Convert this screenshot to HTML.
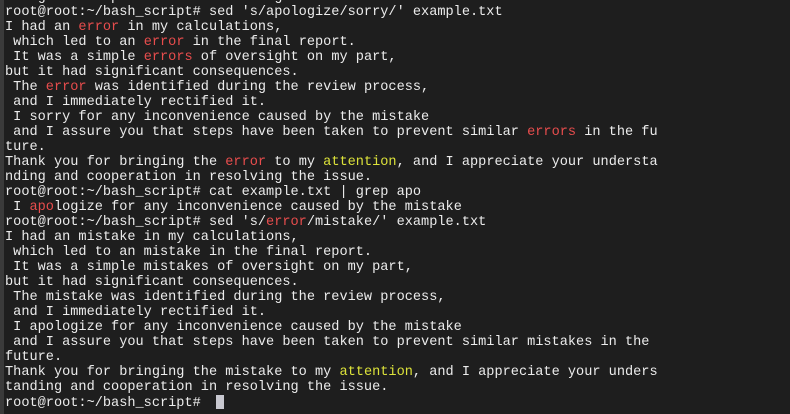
<!DOCTYPE html>
<html><head><style>
html,body{margin:0;padding:0;background:#1e1e1e;overflow:hidden;width:790px;height:414px}
.bar{position:absolute;left:0;top:0;width:4px;height:414px;background:#3a3a3a}
pre{position:absolute;left:5px;top:-10.5px;margin:0;font-family:"Liberation Mono",monospace;font-size:13.6px;line-height:15px;color:#ececec;letter-spacing:0}
.r{color:#e84d4d}.y{color:#dce23a}
.c{display:inline-block;width:8px;height:14px;background:#c8c8d0;vertical-align:-3px;margin-left:7px}
</style></head><body><div class="bar"></div><pre>nding and cooperation in resolving the issue.
root@root:~/bash_script# sed 's/apologize/sorry/' example.txt
I had an <span class="r">error</span> in my calculations,
 which led to an <span class="r">error</span> in the final report.
 It was a simple <span class="r">errors</span> of oversight on my part,
but it had significant consequences.
 The <span class="r">error</span> was identified during the review process,
 and I immediately rectified it.
 I sorry for any inconvenience caused by the mistake
 and I assure you that steps have been taken to prevent similar <span class="r">errors</span> in the fu
ture.
Thank you for bringing the <span class="r">error</span> to my <span class="y">attention</span>, and I appreciate your understa
nding and cooperation in resolving the issue.
root@root:~/bash_script# cat example.txt | grep apo
 I <span class="r">apo</span>logize for any inconvenience caused by the mistake
root@root:~/bash_script# sed 's/<span class="r">error</span>/mistake/' example.txt
I had an mistake in my calculations,
 which led to an mistake in the final report.
 It was a simple mistakes of oversight on my part,
but it had significant consequences.
 The mistake was identified during the review process,
 and I immediately rectified it.
 I apologize for any inconvenience caused by the mistake
 and I assure you that steps have been taken to prevent similar mistakes in the
future.
Thank you for bringing the mistake to my <span class="y">attention</span>, and I appreciate your unders
tanding and cooperation in resolving the issue.
root@root:~/bash_script# <span class="c"></span></pre></body></html>
